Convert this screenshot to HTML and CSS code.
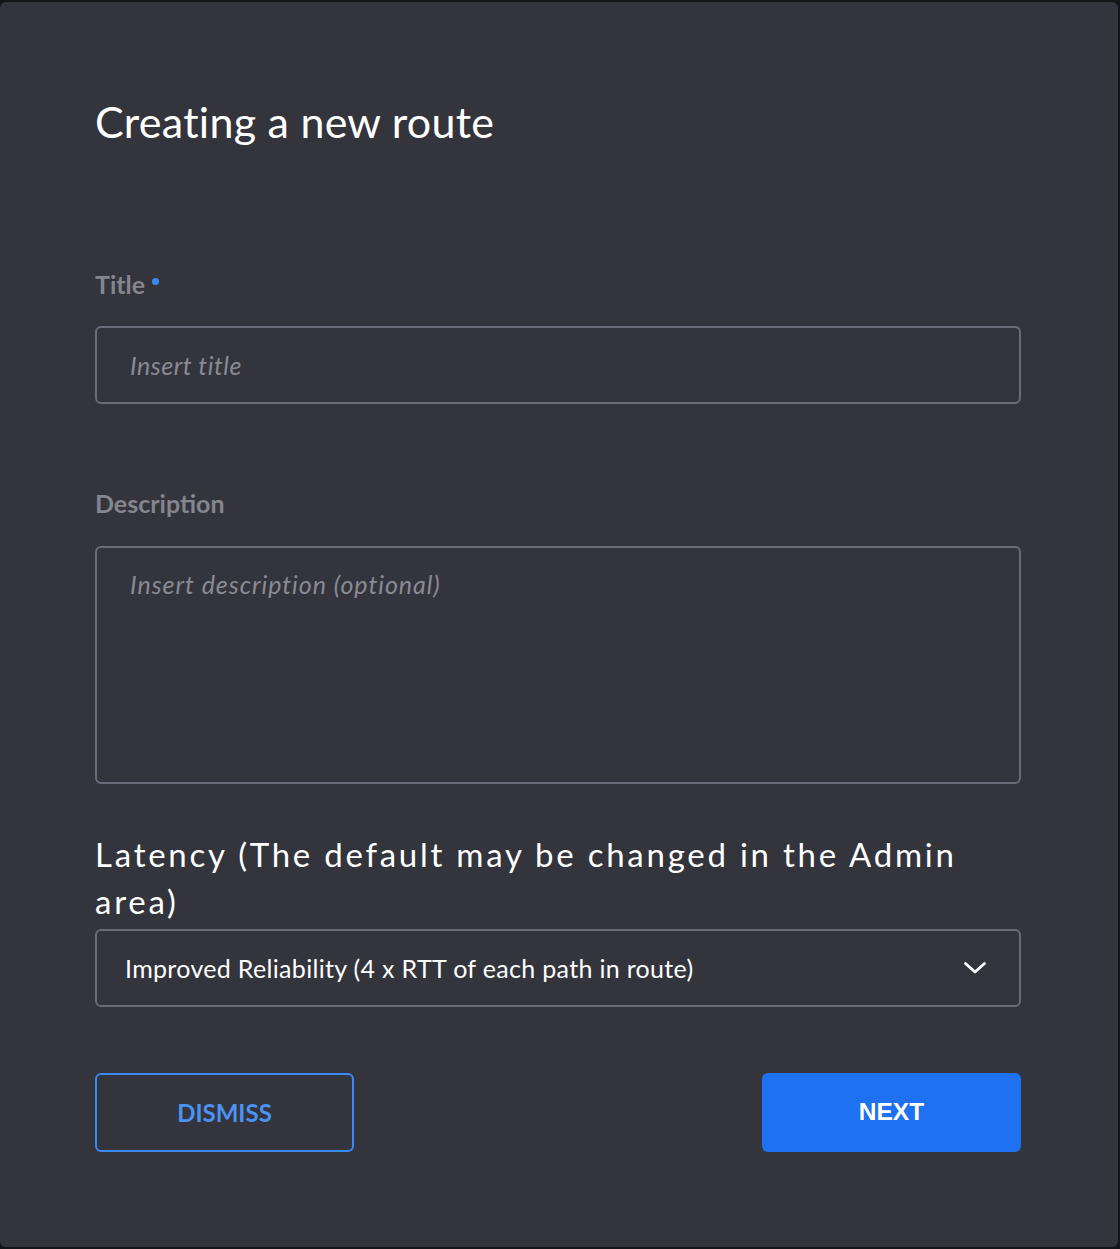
FILE: index.html
```html
<!DOCTYPE html>
<html lang="en">
<head>
<meta charset="utf-8">
<title>Creating a new route</title>
<link rel="stylesheet" href="styles.css">
</head>
<body>
<div class="dialog">
  <h1 class="dialog-title">Creating a new route</h1>

  <div class="field field-title">
    <label class="field-label" for="title">Title<span class="req-dot"></span></label>
    <input class="text-input" id="title" type="text" placeholder="Insert title">
  </div>

  <div class="field field-desc">
    <label class="field-label" for="desc">Description</label>
    <textarea class="text-area" id="desc" placeholder="Insert description (optional)"></textarea>
  </div>

  <div class="field field-latency">
    <h2 class="section-heading">Latency (The default may be changed in the Admin area)</h2>
    <div class="select">
      <span class="select-value">Improved Reliability (4 x RTT of each path in route)</span>
      <svg class="chevron" width="24" height="14" viewBox="0 0 24 14" aria-hidden="true">
        <path d="M2.5 2.5 L12 11 L21.5 2.5" fill="none" stroke="#ffffff" stroke-width="2.8" stroke-linecap="round" stroke-linejoin="round"/>
      </svg>
    </div>
  </div>

  <div class="actions">
    <button class="btn btn-outline" type="button">DISMISS</button>
    <button class="btn btn-primary" type="button">NEXT</button>
  </div>
</div>
</body>
</html>
```

FILE: styles.css
```css
html, body {
  margin: 0;
  padding: 0;
}

body {
  background: #141519;
  width: 1120px;
  height: 1249px;
  overflow: hidden;
  font-family: Lato, "Noto Sans", sans-serif;
}

.dialog {
  box-sizing: border-box;
  margin-top: 2px;
  width: 1118px;
  height: 1245px;
  background: #33343c;
  border-radius: 6px;
  padding: 94px 97px 0 95px;
  display: flex;
  flex-direction: column;
}

.dialog-title {
  margin: 0;
  font-size: 43px;
  line-height: 1.2;
  font-weight: 400;
  letter-spacing: 0.25px;
  color: #ffffff;
}

.field {
  display: flex;
  flex-direction: column;
}

.field-title {
  margin-top: 121px;
}

.field-desc {
  margin-top: 84px;
}

.field-latency {
  margin-top: 47px;
}

.field-label {
  font-size: 25px;
  line-height: 30px;
  font-weight: 700;
  color: #85858e;
  margin-bottom: 27.5px;
  display: flex;
  align-items: flex-start;
}

.req-dot {
  width: 7px;
  height: 7px;
  border-radius: 50%;
  background: #3a89f5;
  margin-left: 7px;
  margin-top: 9px;
}

.text-input,
.text-area {
  box-sizing: border-box;
  width: 100%;
  background: transparent;
  border: 2px solid #6c6b78;
  border-radius: 6px;
  color: #ffffff;
  font-family: Lato, "Noto Sans", sans-serif;
  font-size: 25px;
  line-height: 30px;
  padding: 0 33px;
  margin: 0;
  outline: none;
}

.text-input {
  height: 78px;
  letter-spacing: 0.5px;
}

.text-area {
  height: 238px;
  padding-top: 21px;
  resize: none;
  display: block;
  letter-spacing: 0.95px;
}

.text-input::placeholder,
.text-area::placeholder {
  color: #8a8a93;
  font-style: italic;
  opacity: 1;
}

.section-heading {
  margin: 0 0 4px 0;
  font-size: 33px;
  line-height: 47px;
  font-weight: 400;
  color: #ffffff;
  letter-spacing: 2.75px;
}

.select {
  box-sizing: border-box;
  height: 78px;
  border: 2px solid #6c6b78;
  border-radius: 6px;
  display: flex;
  align-items: center;
  justify-content: space-between;
  padding: 0 32px 0 28px;
}

.select-value {
  font-size: 25px;
  line-height: 30px;
  letter-spacing: 0.32px;
  color: #ffffff;
}

.chevron {
  display: block;
}

.actions {
  margin-top: 66px;
  display: flex;
  justify-content: space-between;
}

.btn {
  box-sizing: border-box;
  width: 259px;
  height: 79px;
  border-radius: 6px;
  font-weight: 700;
  cursor: pointer;
  padding: 0;
}

.btn-outline {
  background: transparent;
  border: 2px solid #3a89f5;
  color: #4b93f3;
  font-family: Lato, "Noto Sans", sans-serif;
  font-size: 24px;
}

.btn-primary {
  background: #1e71f0;
  border: none;
  color: #ffffff;
  font-family: "Liberation Sans", Arial, sans-serif;
  font-size: 24.5px;
}
```
